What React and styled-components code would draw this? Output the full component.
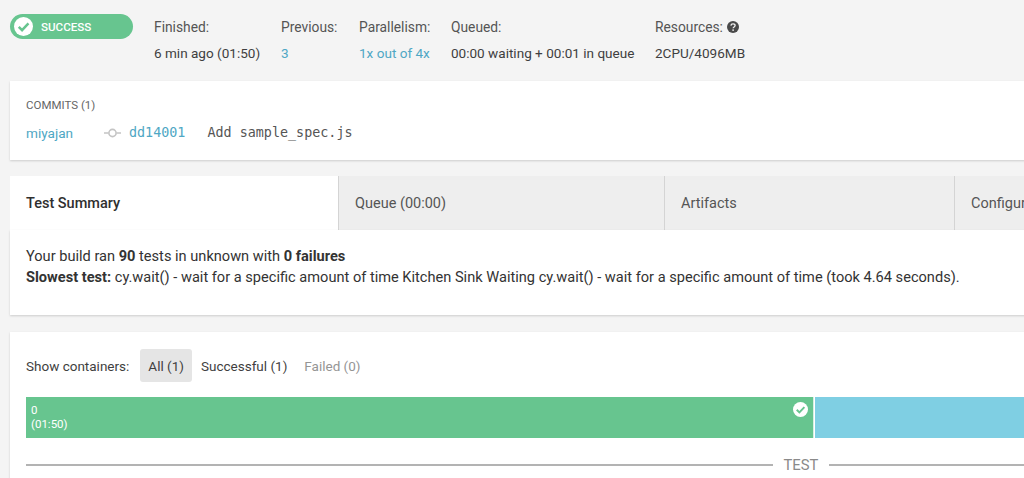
import React from "react";
import styled, { createGlobalStyle } from "styled-components";

const Global = createGlobalStyle`
  html, body { margin: 0; padding: 0; height: 478px; overflow: hidden; background: #f4f4f4; }
  body { font-family: Roboto, "Liberation Sans", sans-serif; font-size: 14px; color: #3f3f3f; }
`;

const Page = styled.div`
  width: 1200px;
  padding: 14px 0 0 10px;
  display: flex;
  flex-direction: column;
`;
const StatusRow = styled.div`
  display: flex;
  align-items: flex-start;
  height: 67px;
`;
const Pill = styled.div`
  width: 123px;
  height: 25px;
  margin-right: 21px;
  padding-left: 4px;
  box-sizing: border-box;
  border-radius: 13px;
  background: #67c58f;
  display: flex;
  align-items: center;
  gap: 8px;
  color: #fff;
  font-size: 11.6px;
  font-weight: 500;
`;
const Meta = styled.div`
  width: ${p => p.$w}px;
  display: flex;
  flex-direction: column;
  gap: 10px;
  padding-top: 5px;
  line-height: 16px;
  white-space: nowrap;
`;
const MetaLabel = styled.div`
  color: #555;
  font-size: 13.8px;
  display: flex;
  align-items: center;
  gap: 4px;
`;
const MetaValue = styled.div`
  font-size: 13.55px;
  color: ${p => (p.$link ? "#4fa7c4" : "#3f3f3f")};
`;
const Card = styled.div`
  background: #fff;
  box-shadow: 0 1px 2px rgba(0, 0, 0, 0.16);
`;
const CommitsCard = styled(Card)`
  height: 79px;
  padding: 17px 16px 0;
  box-sizing: border-box;
  margin-bottom: 16px;
`;
const CommitsTitle = styled.div`
  font-size: 11.5px;
  line-height: 14px;
  color: #666;
  margin-bottom: 13px;
`;
const CommitRow = styled.div`
  display: flex;
  align-items: center;
  height: 16px;
  line-height: 16px;
`;
const Author = styled.span`
  color: #4fa7c4;
  font-size: 13.6px;
  width: 78px;
`;
const Hash = styled.span`
  font-family: "DejaVu Sans Mono", "Liberation Mono", monospace;
  font-size: 13.4px;
  color: #4fa7c4;
  margin: 0 22px 0 8px;
`;
const Message = styled.span`
  font-family: "DejaVu Sans Mono", "Liberation Mono", monospace;
  font-size: 13.4px;
  color: #555;
`;
const Tabs = styled.div`
  display: flex;
  height: 54px;
`;
const Tab = styled.div`
  width: ${p => p.$w}px;
  box-sizing: border-box;
  padding-left: 16px;
  display: flex;
  align-items: center;
  font-size: 14.5px;
  background: ${p => (p.$active ? "#fff" : "#eeeeee")};
  border-right: ${p => (p.$last ? "none" : "1px solid #d4d4d4")};
  color: ${p => (p.$active ? "#2f2f2f" : "#555")};
  font-weight: ${p => (p.$active ? 500 : 400)};
  white-space: nowrap;
`;
const SummaryCard = styled(Card)`
  height: 85px;
  padding: 16px 16px 0;
  box-sizing: border-box;
  margin-bottom: 17px;
  font-size: 14.6px;
  line-height: 21px;
  color: #333;
`;
const ContainersCard = styled(Card)`
  height: 160px;
  padding: 17px 16px 0;
  box-sizing: border-box;
`;
const Filters = styled.div`
  display: flex;
  align-items: center;
  height: 33px;
  margin-bottom: 15px;
  font-size: 13.5px;
`;
const FilterLabel = styled.span`
  margin-right: 10.5px;
  color: #3f3f3f;
`;
const Filter = styled.span`
  padding: 0 8.5px;
  height: 33px;
  display: flex;
  align-items: center;
  border-radius: 3px;
  background: ${p => (p.$active ? "#e5e5e5" : "transparent")};
  color: ${p => (p.$muted ? "#959595" : "#3f3f3f")};
`;
const Bar = styled.div`
  display: flex;
  height: 41px;
  width: 1200px;
`;
const BarGreen = styled.div`
  width: 788px;
  box-sizing: border-box;
  padding: 6px 5px 0;
  background: #67c58f;
  color: #fff;
  font-size: 11.5px;
  line-height: 14px;
  position: relative;
  border-right: 1px solid #d9f0e3;
`;
const BarCheck = styled.span`
  position: absolute;
  top: 5px;
  right: 5px;
  display: flex;
`;
const BarBlue = styled.div`
  flex: 1;
  background: #7fcfe3;
  margin-left: 1px;
`;
const Divider = styled.div`
  width: 998px;
  display: flex;
  align-items: center;
  gap: 10.5px;
  margin-top: 18px;
  color: #8a8a8a;
  line-height: 18px;
  font-size: 14.8px;
`;
const DividerLine = styled.div`
  height: 2px;
  background: #b3b3b3;
  width: ${p => (p.$w ? `${p.$w}px` : "auto")};
  flex: ${p => (p.$w ? "none" : 1)};
`;

const CheckCircle = ({ size, fill, tick }) => (
  <svg width={size} height={size} viewBox="0 0 20 20">
    <circle cx="10" cy="10" r="10" fill={fill} />
    <path d="M5 10.3 8.5 13.8 15.2 6.8" fill="none" stroke={tick} strokeWidth="2.6" />
  </svg>
);

const Help = () => (
  <svg width="12" height="12" viewBox="0 0 12 12">
    <circle cx="6" cy="6" r="6" fill="#4a4a4a" />
    <path d="M3.9 4.6C4 3.4 4.9 2.8 6 2.8c1.2 0 2.1.7 2.1 1.7 0 1.5-2 1.4-2 2.8" fill="none" stroke="#f4f4f4" strokeWidth="1.3" />
    <circle cx="6.1" cy="9.1" r=".85" fill="#f4f4f4" />
  </svg>
);

const CommitIcon = () => (
  <svg width="17" height="10" viewBox="0 0 17 10">
    <path d="M0 5h4.5M12.5 5H17" stroke="#c4c4c4" strokeWidth="1.6" />
    <circle cx="8.5" cy="5" r="3.6" fill="none" stroke="#c4c4c4" strokeWidth="1.6" />
  </svg>
);

export default function App() {
  return (
    <Page>
      <Global />
      <StatusRow>
        <Pill>
          <CheckCircle size={19} fill="#fff" tick="#67c58f" />
          SUCCESS
        </Pill>
        <Meta $w={127}>
          <MetaLabel>Finished:</MetaLabel>
          <MetaValue>6 min ago (01:50)</MetaValue>
        </Meta>
        <Meta $w={78}>
          <MetaLabel>Previous:</MetaLabel>
          <MetaValue $link>3</MetaValue>
        </Meta>
        <Meta $w={92}>
          <MetaLabel>Parallelism:</MetaLabel>
          <MetaValue $link>1x out of 4x</MetaValue>
        </Meta>
        <Meta $w={204}>
          <MetaLabel>Queued:</MetaLabel>
          <MetaValue>00:00 waiting + 00:01 in queue</MetaValue>
        </Meta>
        <Meta $w={120}>
          <MetaLabel>Resources: <Help /></MetaLabel>
          <MetaValue>2CPU/4096MB</MetaValue>
        </Meta>
      </StatusRow>
      <CommitsCard>
        <CommitsTitle>COMMITS (1)</CommitsTitle>
        <CommitRow>
          <Author>miyajan</Author>
          <CommitIcon />
          <Hash>dd14001</Hash>
          <Message>Add sample_spec.js</Message>
        </CommitRow>
      </CommitsCard>
      <Tabs>
        <Tab $active $w={329}>Test Summary</Tab>
        <Tab $w={326}>Queue (00:00)</Tab>
        <Tab $w={290}>Artifacts</Tab>
        <Tab $last $w={255}>Configuration</Tab>
      </Tabs>
      <SummaryCard>
        <div>Your build ran <b>90</b> tests in unknown with <b>0 failures</b></div>
        <div><b>Slowest test:</b> cy.wait() - wait for a specific amount of time Kitchen Sink Waiting cy.wait() - wait for a specific amount of time (took 4.64 seconds).</div>
      </SummaryCard>
      <ContainersCard>
        <Filters>
          <FilterLabel>Show containers:</FilterLabel>
          <Filter $active>All (1)</Filter>
          <Filter>Successful (1)</Filter>
          <Filter $muted>Failed (0)</Filter>
        </Filters>
        <Bar>
          <BarGreen>
            0<br />(01:50)
            <BarCheck><CheckCircle size={15} fill="#fff" tick="#67c58f" /></BarCheck>
          </BarGreen>
          <BarBlue />
        </Bar>
        <Divider>
          <DividerLine $w={747} />
          TEST
          <DividerLine />
        </Divider>
      </ContainersCard>
    </Page>
  );
}
